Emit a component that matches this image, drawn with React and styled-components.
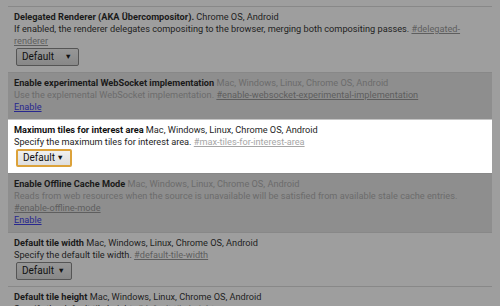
import React from 'react';
import styled, { createGlobalStyle } from 'styled-components';

const Global = createGlobalStyle`
	html, body {
		margin: 0;
		padding: 0;
		background: #9e9e9e;
	}
	body {
		font-family: Roboto, "Liberation Sans", sans-serif;
	}
`

const Page = styled.div`
	width: 500px;
	height: 306px;
	overflow: hidden;
	padding: 6px 8px 0;
	box-sizing: border-box;
	background: #9e9e9e;
`

const bgFor = {
	normal: 'transparent',
	unsupported: '#8e8e8e',
	focus: '#ffffff',
}

const Experiment = styled.div`
	display: flex;
	flex-direction: column;
	align-items: flex-start;
	padding: 4px 6px 6px;
	background: ${p => bgFor[p.$variant]};
	border-top: 1px solid ${p => p.$variant === 'focus' ? '#c4c4c4' : '#888888'};
	font-size: 9.2px;
	line-height: 12px;
	color: ${p => p.$variant === 'unsupported' ? '#6c6c6c' : '#1e1e1e'};
`

const Title = styled.div`
	white-space: nowrap;
`

const Name = styled.span`
	font-weight: 700;
	color: ${p => p.$variant === 'focus' ? '#111' : '#1a1a1a'};
`

const Platforms = styled.span`
	color: inherit;
`

const Desc = styled.div``

const Permalink = styled.a`
	color: ${p => p.$variant === 'focus' ? '#a6a6a6' : '#5e5e5e'};
	text-decoration: underline;
`

const EnableLink = styled.a`
	color: #28288f;
	text-decoration: underline;
`

const Select = styled.div`
	display: flex;
	align-items: center;
	justify-content: space-between;
	box-sizing: border-box;
	width: ${p => p.$width}px;
	height: 18px;
	margin: 1px 0 0 2px;
	padding: 0 6px 0 5px;
	border-radius: 2px;
	font-size: 10px;
	color: #111;
	border: ${p => p.$focus ? '2px solid #dca23a' : '1px solid #555'};
	background: ${p => p.$focus
		? 'linear-gradient(#f0f0f0, #dedede)'
		: 'linear-gradient(#979797, #888888)'};
`

const Arrow = styled.span`
	font-size: 7.5px;
`

function Dropdown({ width, focus }) {
	return (
		<Select $width={width} $focus={focus}>
			<span>Default</span>
			<Arrow>▼</Arrow>
		</Select>
	)
}

const PLATFORMS = 'Mac, Windows, Linux, Chrome OS, Android'

export default function App() {
	return (
		<Page>
			<Global />
			<Experiment $variant="normal">
				<Title>
					<Name>Delegated Renderer (AKA Übercompositor).</Name>{' '}
					<Platforms>Chrome OS, Android</Platforms>
				</Title>
				<Desc>
					If enabled, the renderer delegates compositing to the browser, merging both compositing passes.{' '}
					<Permalink $variant="normal">#delegated-renderer</Permalink>
				</Desc>
				<Dropdown width={63} />
			</Experiment>

			<Experiment $variant="unsupported">
				<Title>
					<Name>Enable experimental WebSocket implementation</Name>{' '}
					<Platforms>{PLATFORMS}</Platforms>
				</Title>
				<Desc>
					Use the explemental WebSocket implementation.{' '}
					<Permalink $variant="unsupported">#enable-websocket-experimental-implementation</Permalink>
				</Desc>
				<EnableLink>Enable</EnableLink>
			</Experiment>

			<Experiment $variant="focus">
				<Title>
					<Name $variant="focus">Maximum tiles for interest area</Name>{' '}
					<Platforms>{PLATFORMS}</Platforms>
				</Title>
				<Desc>
					Specify the maximum tiles for interest area.{' '}
					<Permalink $variant="focus">#max-tiles-for-interest-area</Permalink>
				</Desc>
				<Dropdown width={56} focus />
			</Experiment>

			<Experiment $variant="unsupported">
				<Title>
					<Name>Enable Offline Cache Mode</Name>{' '}
					<Platforms>{PLATFORMS}</Platforms>
				</Title>
				<Desc>
					Reads from web resources when the source is unavailable will be satisfied from available stale cache entries.{' '}
					<Permalink $variant="unsupported">#enable-offline-mode</Permalink>
				</Desc>
				<EnableLink>Enable</EnableLink>
			</Experiment>

			<Experiment $variant="normal">
				<Title>
					<Name>Default tile width</Name>{' '}
					<Platforms>{PLATFORMS}</Platforms>
				</Title>
				<Desc>
					Specify the default tile width.{' '}
					<Permalink $variant="normal">#default-tile-width</Permalink>
				</Desc>
				<Dropdown width={56} />
			</Experiment>

			<Experiment $variant="normal">
				<Title>
					<Name>Default tile height</Name>{' '}
					<Platforms>{PLATFORMS}</Platforms>
				</Title>
				<Desc>
					Specify the default tile height.{' '}
					<Permalink $variant="normal">#default-tile-height</Permalink>
				</Desc>
				<Dropdown width={56} />
			</Experiment>
		</Page>
	)
}
